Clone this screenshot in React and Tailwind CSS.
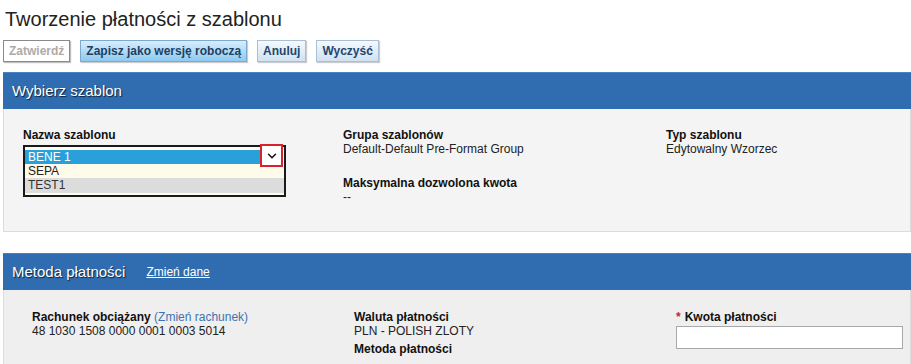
import { ChevronDown } from 'lucide-react';

const Btn = ({ children, variant = 'default' }) => {
  const styles = {
    disabled: 'bg-white border-[#8a8a8a] text-[#b0aaa6] shadow-[1px_1px_1px_rgba(0,0,0,0.25)]',
    primary: 'bg-gradient-to-b from-[#d6edfb] to-[#8dcaf0] border-[#7fa9cc] text-[#1f3f63] shadow-[1px_1px_1px_rgba(0,0,0,0.2)]',
    default: 'bg-gradient-to-b from-[#f5f9fd] to-[#cfe1f3] border-[#a9bfd6] text-[#24466d] shadow-[1px_1px_1px_rgba(0,0,0,0.2)]',
  };
  return (
    <button className={`h-[22px] px-[5px] border text-[12px] font-bold leading-none ${styles[variant]}`}>
      {children}
    </button>
  );
};

const Field = ({ label, value, className = '' }) => (
  <div className={className}>
    <div className="text-[12px] font-bold leading-[14px] text-[#111]">{label}</div>
    <div className="text-[12px] leading-[14px] text-[#222]">{value}</div>
  </div>
);

const PanelHeader = ({ children }) => (
  <div className="h-[37px] bg-[#2f6cb0] border-t border-[#4a82c0] flex items-center pl-[9px] gap-[21px]">
    {children}
  </div>
);

export default function App() {
  return (
    <div className="w-[911px] h-[364px] overflow-hidden bg-white font-['Liberation_Sans',Arial,sans-serif]">
      <h1 className="pl-[5px] pt-[7px] text-[20px] leading-[24px] text-[#222]">Tworzenie płatności z szablonu</h1>

      <div className="flex gap-[10px] pl-[3px] mt-[9px]">
        <Btn variant="disabled">Zatwierdź</Btn>
        <Btn variant="primary">Zapisz jako wersję roboczą</Btn>
        <Btn>Anuluj</Btn>
        <Btn>Wyczyść</Btn>
      </div>

      {/* Wybierz szablon */}
      <div className="ml-[3px] mt-[10px]">
        <PanelHeader>
          <span className="text-white text-[15px] [text-shadow:1px_1px_1px_rgba(0,0,0,0.7)]">Wybierz szablon</span>
        </PanelHeader>
        <div className="h-[123px] bg-[#f4f4f4] border border-t-0 border-[#dcdcdc] grid grid-cols-[320px_323px_1fr] pl-[19px] pt-[19px]">
          <div>
            <div className="text-[12px] font-bold leading-[14px] text-[#111]">Nazwa szablonu</div>
            <div className="relative mt-[3px] w-[263px] h-[52px] border-2 border-[#1a1a1a] bg-[#fffbea] pt-[3px] text-[12px] leading-[14px] text-[#222]">
              <div className="h-[14px] bg-[#2aa0da] text-white pl-[3px] mr-[23px]">BENE 1</div>
              <div className="h-[14px] pl-[3px]">SEPA</div>
              <div className="h-[15px] bg-[#dcdcdc] pl-[3px] text-[#333]">TEST1</div>
              <div className="absolute -top-[3px] right-[1px] w-[23px] h-[23px] border-2 border-[#d9222c] bg-white flex items-center justify-center">
                <ChevronDown size={14} strokeWidth={2.5} className="text-[#111]" />
              </div>
            </div>
          </div>
          <div>
            <Field label="Grupa szablonów" value="Default-Default Pre-Format Group" />
            <Field label="Maksymalna dozwolona kwota" value="--" className="mt-[20px]" />
          </div>
          <div>
            <Field label="Typ szablonu" value="Edytowalny Wzorzec" />
          </div>
        </div>
      </div>

      {/* Metoda płatności */}
      <div className="ml-[3px] mt-[21px]">
        <PanelHeader>
          <span className="text-white text-[15px] [text-shadow:1px_1px_1px_rgba(0,0,0,0.7)]">Metoda płatności</span>
          <a href="#" className="text-white text-[12px] underline">Zmień dane</a>
        </PanelHeader>
        <div className="h-[80px] bg-[#efefef] border border-t-0 border-[#dcdcdc] grid grid-cols-[322px_322px_1fr] pl-[28px] pt-[20px]">
          <div>
            <div className="text-[12px] leading-[14px] text-[#111]">
              <span className="font-bold">Rachunek obciążany</span>{' '}
              <span className="text-[#3f73b0]">(Zmień rachunek)</span>
            </div>
            <div className="text-[12px] leading-[14px] text-[#222]">48 1030 1508 0000 0001 0003 5014</div>
          </div>
          <div>
            <Field label="Waluta płatności" value="PLN - POLISH ZLOTY" />
            <div className="mt-[4px] text-[12px] font-bold leading-[14px] text-[#111]">Metoda płatności</div>
          </div>
          <div>
            <div className="text-[12px] font-bold leading-[14px] text-[#111]">
              <span className="text-[#c0282d] mr-[4px]">*</span>Kwota płatności
            </div>
            <input className="mt-[2px] w-[227px] h-[23px] border border-[#a8a8a8] bg-white" />
          </div>
        </div>
      </div>
    </div>
  );
}
